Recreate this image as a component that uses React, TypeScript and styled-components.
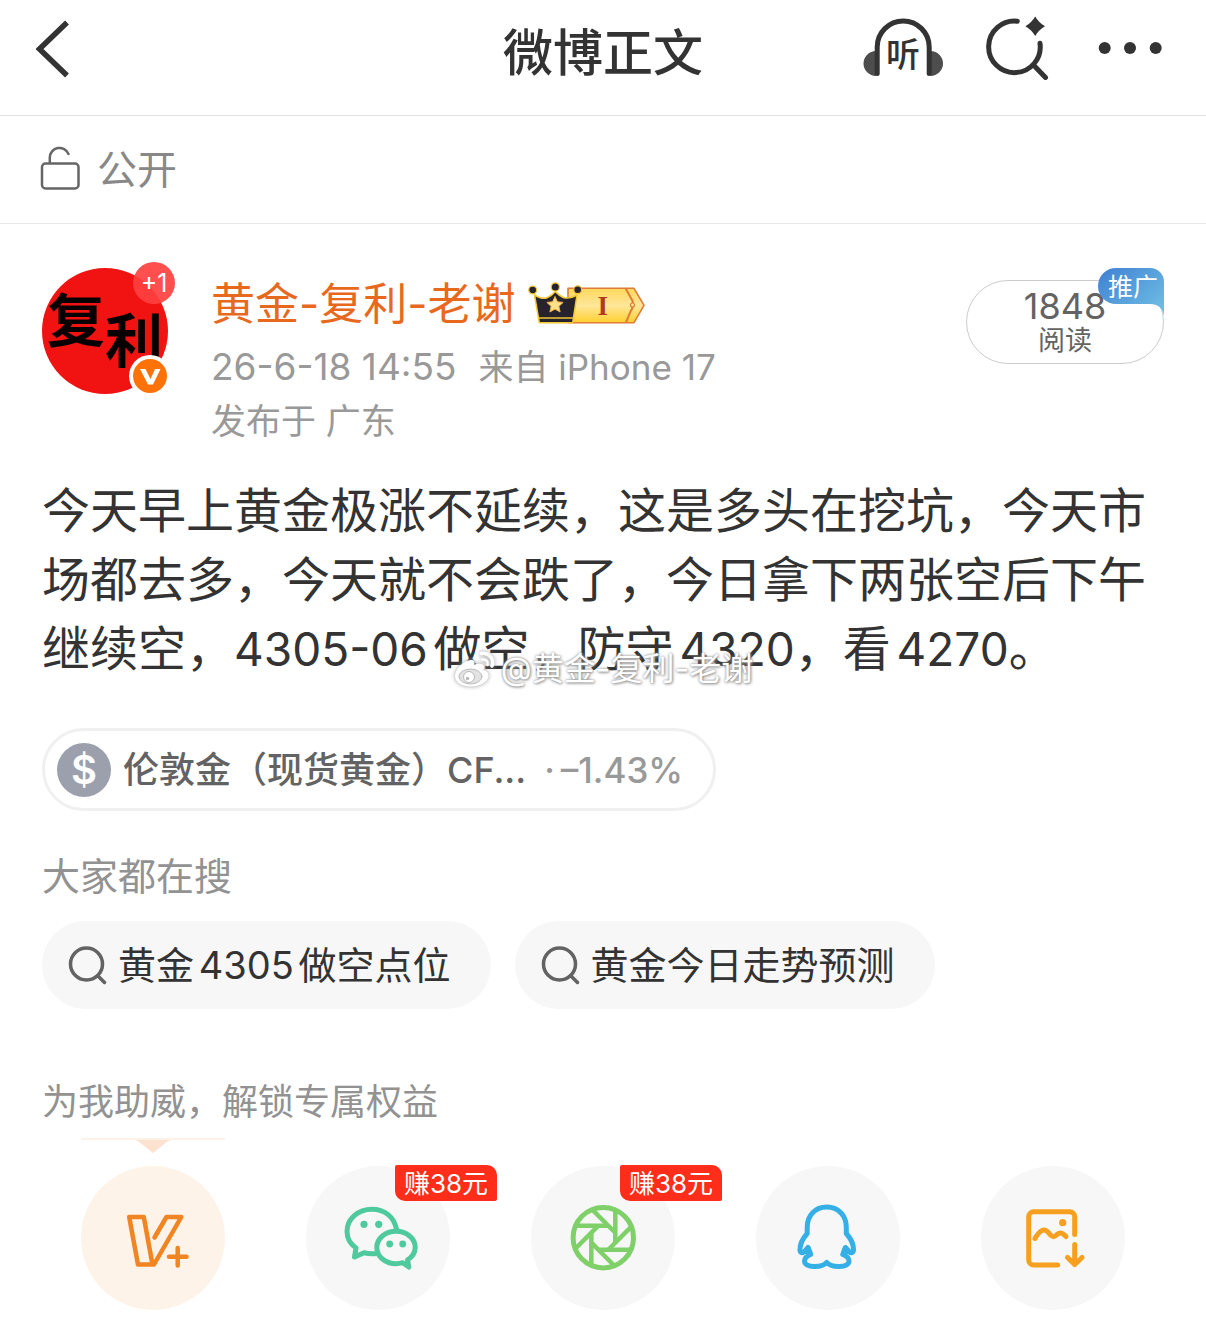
import styled, { createGlobalStyle } from 'styled-components';

const GlobalStyle = createGlobalStyle`
  * {
    box-sizing: border-box;
  }

  body {
    margin: 0;

    background: #fff;
    color: #333;
    font-family: 'Inter', 'Noto Sans CJK SC', sans-serif;
    text-autospace: normal;
  }

  button {
    padding: 0;

    border: 0;
    background: none;
    color: inherit;
    font: inherit;
    cursor: pointer;
  }

  a {
    color: inherit;
    text-decoration: none;
  }

  h1, h2, p, ul {
    margin: 0;
    padding: 0;

    font-weight: 400;
    list-style: none;
  }

  svg {
    display: block;
  }
`;

const HeaderBlock = styled.header`
  display: grid;
  grid-template-columns: 1fr auto 1fr;
  align-items: start;

  height: 116px;
  padding: 16px 36px 0;

  border-bottom: 1px solid #e3e3e3;

  .title {
    font-size: 50px;
    font-weight: 500;
    line-height: 74px;
  }
  .actions {
    display: flex;
    justify-content: flex-end;
    gap: 42px;
  }
`;

const VisibilityBlock = styled.div`
  display: flex;
  align-items: center;
  gap: 17px;

  height: 108px;
  padding: 0 40px;

  border-bottom: 1px solid #e6e6e6;
  color: #888;
  font-size: 40px;
  line-height: 54px;

  svg {
    margin-bottom: 4px;
  }
`;

const PostBlock = styled.article`
  padding: 44px 42px 0;
`;

const AuthorBlock = styled.div`
  display: flex;
  align-items: flex-start;

  .info {
    flex: 1;

    margin-left: 43px;
  }
  .name {
    display: flex;
    align-items: center;
    gap: 13px;

    color: #e8691e;
    font-size: 44px;
    line-height: 72px;
  }
  .meta {
    display: flex;
    gap: 22px;

    color: #999;
    font-size: 35px;
    line-height: 54px;
  }
  .time {
    font-size: 37px;
  }
`;

const Avatar = styled.a`
  position: relative;

  display: flex;
  justify-content: center;

  width: 126px;
  height: 126px;
  padding-top: 11px;

  border-radius: 50%;
  background: #f11212;
  color: #080000;
  font-family: 'Kaiti SC', 'Noto Sans CJK SC', sans-serif;
  font-size: 58px;
  font-weight: 700;
  line-height: 76px;

  .low {
    padding-top: 20px;
  }
`;

const PlusBadge = styled.span`
  position: absolute;
  top: -6px;
  right: -7px;

  width: 42px;
  height: 42px;

  border-radius: 50%;
  background: rgba(255, 64, 64, 0.92);
  color: #fff;
  font-family: 'Inter', sans-serif;
  font-size: 25px;
  font-weight: 400;
  line-height: 43px;
  text-align: center;
`;

const VerifiedBadge = styled.span`
  position: absolute;
  right: -3px;
  bottom: -3px;
`;

const ReadCount = styled.button`
  position: relative;

  display: flex;
  flex-direction: column;
  align-items: center;

  && {
    width: 198px;
    height: 84px;
    margin-top: 12px;
    padding-top: 8px;

    border: 1px solid #ccc;
    border-radius: 42px;
    color: #636363;
  }

  .count {
    font-size: 36px;
    line-height: 34px;
  }
  .label {
    font-size: 27px;
    line-height: 36px;
  }
`;

const PromoteTag = styled.span`
  position: absolute;
  top: -13px;
  right: -1px;

  color: #fff;
  font-size: 25px;
  line-height: 38px;

  svg {
    position: absolute;
    inset: 0;
  }
  .text {
    position: relative;

    display: block;
    width: 66px;
    height: 48px;
    padding-left: 4px;

    text-align: center;
  }
`;

const ContentBlock = styled.div`
  position: relative;

  margin-top: 28px;

  font-size: 48px;
  line-height: 69px;
`;

const Num = styled.span`
  font-size: 46px;
`;

const Watermark = styled.div`
  position: absolute;
  right: 0;
  bottom: -5px;
  left: 0;

  display: flex;
  align-items: center;
  justify-content: center;
  gap: 5px;

  color: #fff;
  font-size: 32px;
  line-height: 40px;
  text-shadow: 0 0 3px #888, 1px 1px 3px #999;

  svg {
    filter: drop-shadow(0 0 2px #999);
  }
`;

const StockLink = styled.a`
  display: flex;
  align-items: center;

  width: fit-content;
  height: 83px;
  margin-top: 44px;
  margin-bottom: 38px;
  padding: 0 30px 0 12px;

  border: 3px solid #f0f0f0;
  border-radius: 42px;
  color: #636363;
  font-size: 36px;
  font-weight: 500;
  line-height: 54px;

  .coin {
    width: 54px;
    height: 54px;
    margin-right: 12px;

    border-radius: 50%;
    background: #9ca0ad;
    color: #fff;
    font-size: 40px;
    font-weight: 600;
    text-align: center;
  }
  .rate {
    display: flex;
    gap: 6px;

    margin-left: 18px;

    color: #999;
    font-size: 35px;
  }
`;

const SectionTitle = styled.h2<{ $size: number }>`
  color: #929292;
  font-size: ${({ $size }) => $size}px;
  line-height: 54px;
`;

const SearchList = styled.ul`
  display: flex;
  gap: 24px;

  margin-top: 18px;
  margin-bottom: 66px;

  a {
    display: flex;
    align-items: center;
    gap: 10px;

    height: 88px;
    padding: 0 40px 0 26px;

    border-radius: 44px;
    background: #f7f7f7;
    font-size: 38px;
    line-height: 54px;
  }
`;

const ShareBlock = styled.div`
  padding: 9px 39px 24px;
`;

const Pointer = styled.div`
  width: 144px;
  height: 28px;

  border-top: 2px solid #fdf1e8;

  svg {
    margin: 0 auto;
  }
`;

const ShareList = styled.ul`
  display: flex;
  justify-content: space-between;
`;

const ShareButton = styled.button<{ $active?: boolean }>`
  && {
    position: relative;

    width: 144px;
    height: 144px;

    border-radius: 50%;
    background: ${({ $active }) => ($active ? '#fef3e9' : '#f7f7f7')};
  }

  .bonus {
    position: absolute;
    top: -1px;
    left: 89px;

    width: 102px;
    height: 36px;

    border-radius: 2px 10px 2px 10px;
    background: #ff2d19;
    color: #fff;
    font-size: 26px;
    line-height: 38px;
    text-autospace: no-autospace;
    white-space: nowrap;
  }
`;

const BackIcon = () => (
  <svg width='36' height='64' viewBox='36 16 36 64' fill='none' stroke='#333' strokeWidth='5.5'>
    <path d='M67 22.5 39.500 49 67 75.500' />
  </svg>
);

const ListenIcon = () => (
  <svg width='80' height='64' viewBox='863 16 80 64'>
    <path d='M876 51a12.500 12.500 0 0 0 0 25zM930.500 51a12.500 12.500 0 0 1 0 25z' fill='#4d4d4d' />
    <path
      d='M877.200 73.500V47a26 26 0 0 1 52 0v26.500'
      fill='none'
      stroke='#333'
      strokeWidth='5'
      strokeLinecap='round'
    />
    <text x='903' y='67' fontSize='34' fontWeight='500' textAnchor='middle' fill='#333'>
      听
    </text>
  </svg>
);

const SmartSearchIcon = () => (
  <svg width='70' height='64' viewBox='985 16 70 64' fill='none' stroke='#333' strokeWidth='5' strokeLinecap='round'>
    <path d='M1017.300 21.200A25.800 25.800 0 1 0 1040 43.300M1033.500 65l12 12.500' />
    <path
      d='M1035.200 16.500q3.600 6.200 9.800 9.800-6.200 3.600-9.800 9.800-3.600-6.200-9.800-9.800 6.200-3.600 9.800-9.800z'
      fill='#333'
      stroke='none'
    />
  </svg>
);

const MoreIcon = () => (
  <svg width='73' height='64' viewBox='1097 16 73 64' fill='#333'>
    <circle cx='1104.700' cy='48' r='6' />
    <circle cx='1130' cy='48' r='6' />
    <circle cx='1155.700' cy='48' r='6' />
  </svg>
);

const UnlockIcon = () => (
  <svg width='40' height='44' viewBox='40 146 40 44' fill='none' stroke='#666' strokeWidth='2.500' strokeLinecap='round'>
    <rect x='42' y='163.500' width='36.500' height='25' rx='3.500' />
    <path d='M49.800 163v-5.500a9.700 9.700 0 0 1 18.700-3.500' />
  </svg>
);

const SearchIcon = () => (
  <svg width='40' height='40' viewBox='0 0 40 40' fill='none' stroke='#636363' strokeWidth='3.500' strokeLinecap='round'>
    <circle cx='18.500' cy='19' r='16' />
    <path d='m30 31 6.500 6.500' />
  </svg>
);

const LevelBadge = () => (
  <svg width='118' height='44' viewBox='0 0 118 44'>
    <defs>
      <linearGradient id='gold' x1='0' y1='0' x2='0' y2='1'>
        <stop offset='0' stopColor='#ffd75a' />
        <stop offset='0.500' stopColor='#ffe79a' />
        <stop offset='1' stopColor='#ffd02e' />
      </linearGradient>
    </defs>
    <path d='M40 6.300h66l10 17-10 17.400H40z' fill='url(#gold)' stroke='#e07b38' strokeWidth='1.600' strokeLinejoin='round' />
    <path d='m97.700 6.500 6 11q2 2 .5 5.500 1 3-1.500 6L98 40.500' fill='none' stroke='#e07b38' strokeWidth='2' />
    <circle cx='104.500' cy='23' r='2' fill='#ffe79a' stroke='#e07b38' strokeWidth='1.200' />
    <path
      d='M6.500 13q8 5 13 2.500Q24 13.500 27.300 9.500q3.500 4 8 6 6 2 13.700-2.500l-4.300 27.700H11.300z'
      fill='#26232f'
      stroke='#f2c832'
      strokeWidth='1.500'
      strokeLinejoin='round'
    />
    <path d='M10.500 36h35' stroke='#f2c832' strokeWidth='1.300' />
    <g fill='#26232f' stroke='#f2c832' strokeWidth='1.200'>
      <circle cx='4.700' cy='8' r='3.900' />
      <circle cx='27.300' cy='5' r='4.100' />
      <circle cx='49.700' cy='7.700' r='3.900' />
    </g>
    <path
      d='m27 14.500 2.400 5.300 5.700.6-4.200 3.900 1.200 5.700-5.100-2.900-5.100 2.900 1.200-5.700-4.200-3.900 5.700-.6z'
      fill='#ffe08a'
      stroke='#f0b53c'
    />
    <text
      x='74.700'
      y='33'
      fontFamily='Liberation Serif, serif'
      fontSize='27'
      fontWeight='700'
      textAnchor='middle'
      fill='#b23a1c'
    >
      I
    </text>
  </svg>
);

const WeiboIcon = () => (
  <svg width='43' height='38' viewBox='0 0 43 38' fill='none' stroke='#fff' strokeLinecap='round'>
    <path
      d='M2 26c0-7 9-16 16-16 3 0 4 2 3 5 4-2 10-2 10 2 0 1-.5 2-.5 3 3 1 5 2.500 5 5.500C35.500 32 27 36.500 18 36.500S2 32.500 2 26z'
      fill='#fff'
      stroke='none'
    />
    <ellipse cx='17.500' cy='26.500' rx='11.500' ry='7.500' fill='#e2e2e2' stroke='#bbb' />
    <circle cx='16' cy='27' r='5.500' fill='#fff' stroke='#bbb' />
    <circle cx='14.500' cy='28.500' r='1.800' fill='#bbb' stroke='none' />
    <path d='M28 3.500C36 2 41.500 9 39 16' strokeWidth='3.500' />
    <path d='M29 9.500c4-.7 6.500 2 5.500 5.500' strokeWidth='2.500' />
  </svg>
);

const PlusIcon = () => (
  <svg width='144' height='144' fill='none' stroke='#f08522' strokeWidth='4.500' strokeLinecap='round' strokeLinejoin='round'>
    <path d='M48.200 51h14.600l8.700 47.500H57zM73.500 71.500 85.500 51h14.800L73 98.500M96.700 82v17.500M88 90.700h17.500' />
  </svg>
);

const WechatIcon = () => (
  <svg width='144' height='144' fill='none' stroke='#4fc99e' strokeWidth='5' strokeLinejoin='round'>
    <path d='M90.700 64C88 50 78 43.300 66 43.300c-14 0-25 9.700-25 22.200 0 7 3.400 12.500 9 16.500l-1.500 9 9.500-4.300c4.500 1.100 8 1.300 12.500.8' />
    <path d='M101.500 93.800c5-3 7.700-7.500 7.700-12.500 0-8.800-8.500-16-19.200-16s-19.200 7.200-19.200 16.200S79.300 97.700 90 97.700c2.300 0 4.700-.4 6.700-1l6.100 4.300z' />
    <g fill='#4fc99e' stroke='none'>
      <circle cx='58' cy='58.300' r='3.600' />
      <circle cx='72.700' cy='58.300' r='3.600' />
      <circle cx='83.700' cy='78' r='3.400' />
      <circle cx='96.700' cy='78' r='3.400' />
    </g>
  </svg>
);

const MomentsIcon = () => (
  <svg width='144' height='144' fill='none' stroke='#7fd069' strokeWidth='4.500'>
    <g transform='translate(72.300 71.700)'>
      <circle r='30.200' strokeWidth='5' />
      {[0, 45, 90, 135, 180, 225, 270, 315].map((angle) => (
        <path key={angle} d='M-28-12H5' transform={`rotate(${angle})`} />
      ))}
    </g>
  </svg>
);

const QqIcon = () => (
  <svg width='144' height='144' fill='none' stroke='#35b0e6' strokeWidth='5' strokeLinejoin='round'>
    <path d='M70.700 41c-11.500 0-19.500 8.500-19.500 20v6.500c-4.500 5-7.200 10.500-7.200 16 0 3.500 2.500 4.500 5 1.500l3-3.500c.3 2.700 1.300 5 2.700 7-4 1.500-6.200 4-6.200 6.500 0 7 17 7 22.200 1.500C76 102 93 102 93 95c0-2.500-2.200-5-6.200-6.500 1.400-2 2.400-4.300 2.700-7l3 3.500c2.500 3 5 2 5-1.500 0-5.500-2.700-11-7.200-16V61c0-11.500-8-20-19.600-20z' />
    <path d='m49 85.500 3.500-3 1.500 4zM92.500 85.500l-3.500-3-1.500 4z' />
  </svg>
);

const SaveImageIcon = () => (
  <svg width='144' height='144' fill='none' stroke='#f7a01f' strokeWidth='5' strokeLinecap='round' strokeLinejoin='round'>
    <path d='M93.700 68.500V50.700a5 5 0 0 0-5-5h-36a5 5 0 0 0-5 5V94a5 5 0 0 0 5 5h24' />
    <path d='M93.700 78.500v20M86.500 91.500l7.200 7 7.300-7' />
    <path d='M54 72.500c6-10.500 10-10.500 15-4 3 3 4 3 7 0 3.500-3 5.500-1.500 9 2' />
    <circle cx='81.700' cy='56.700' r='3.600' fill='#f7a01f' stroke='none' />
  </svg>
);

const shares = [
  { label: 'V+', Icon: PlusIcon, active: true },
  { label: '微信', Icon: WechatIcon, bonus: '赚38元' },
  { label: '朋友圈', Icon: MomentsIcon, bonus: '赚38元' },
  { label: 'QQ', Icon: QqIcon },
  { label: '保存图片', Icon: SaveImageIcon },
];

const searches = ['黄金4305做空点位', '黄金今日走势预测'];

const Header = () => {
  return (
    <HeaderBlock>
      <div>
        <button type='button' aria-label='返回'>
          <BackIcon />
        </button>
      </div>
      <h1 className='title'>微博正文</h1>
      <div className='actions'>
        <button type='button' aria-label='听'>
          <ListenIcon />
        </button>
        <button type='button' aria-label='搜索'>
          <SmartSearchIcon />
        </button>
        <button type='button' aria-label='更多'>
          <MoreIcon />
        </button>
      </div>
    </HeaderBlock>
  );
};

const Author = () => {
  return (
    <AuthorBlock>
      <Avatar href='#'>
        <span>复</span>
        <span className='low'>利</span>
        <PlusBadge>+1</PlusBadge>
        <VerifiedBadge>
          <svg width='42' height='42' viewBox='0 0 42 42'>
            <circle cx='21' cy='21' r='21' fill='#fff' />
            <circle cx='21' cy='21' r='17' fill='#ff7207' />
            <path d='M11 14h5.500l5 10 4.500-10h5.500L24 29.500h-5z' fill='#fff' />
          </svg>
        </VerifiedBadge>
      </Avatar>
      <div className='info'>
        <div className='name'>
          <a href='#'>黄金-复利-老谢</a>
          <LevelBadge />
        </div>
        <p className='meta'>
          <span className='time'>26-6-18 14:55</span>
          <span>来自 iPhone 17</span>
        </p>
        <p className='meta'>发布于 广东</p>
      </div>
      <ReadCount type='button'>
        <span className='count'>1848</span>
        <span className='label'>阅读</span>
        <PromoteTag>
          <svg width='66' height='48' viewBox='0 0 66 48'>
            <defs>
              <linearGradient id='promote' x1='0' y1='0' x2='1' y2='0.800'>
                <stop offset='0' stopColor='#3f7fd4' />
                <stop offset='1' stopColor='#6cbce2' />
              </linearGradient>
            </defs>
            <path d='M18 0h34a14 14 0 0 1 14 14v34q-2-12-14-12H18a18 18 0 0 1 0-36z' fill='url(#promote)' />
          </svg>
          <span className='text'>推广</span>
        </PromoteTag>
      </ReadCount>
    </AuthorBlock>
  );
};

const App = () => {
  return (
    <>
      <GlobalStyle />
      <Header />
      <VisibilityBlock>
        <UnlockIcon />
        <span>公开</span>
      </VisibilityBlock>
      <PostBlock>
        <Author />
        <ContentBlock>
          <p>
            今天早上黄金极涨不延续，这是多头在挖坑，今天市场都去多，今天就不会跌了，今日拿下两张空后下午继续空，
            <Num>4305-06</Num>做空，防守<Num>4320</Num>，看<Num>4270</Num>。
          </p>
          <Watermark>
            <WeiboIcon />
            <span>@黄金-复利-老谢</span>
          </Watermark>
        </ContentBlock>
        <StockLink href='#'>
          <span className='coin'>$</span>
          <span>伦敦金（现货黄金）CF...</span>
          <span className='rate'>
            <span>·</span>
            <span>–1.43%</span>
          </span>
        </StockLink>
        <SectionTitle $size={38}>大家都在搜</SectionTitle>
        <SearchList>
          {searches.map((text) => (
            <li key={text}>
              <a href='#'>
                <SearchIcon />
                {text}
              </a>
            </li>
          ))}
        </SearchList>
        <SectionTitle $size={36}>为我助威，解锁专属权益</SectionTitle>
        <ShareBlock>
          <Pointer>
            <svg width='36' height='13' viewBox='0 0 36 13'>
              <path d='M0 0h36q-3 .5-5 2.500L18 13 5 2.500Q3 .5 0 0z' fill='#fde3cf' />
            </svg>
          </Pointer>
          <ShareList>
            {shares.map(({ label, Icon, active, bonus }) => (
              <li key={label}>
                <ShareButton type='button' aria-label={label} $active={active}>
                  <Icon />
                  {bonus && <span className='bonus'>{bonus}</span>}
                </ShareButton>
              </li>
            ))}
          </ShareList>
        </ShareBlock>
      </PostBlock>
    </>
  );
};

export default App;
